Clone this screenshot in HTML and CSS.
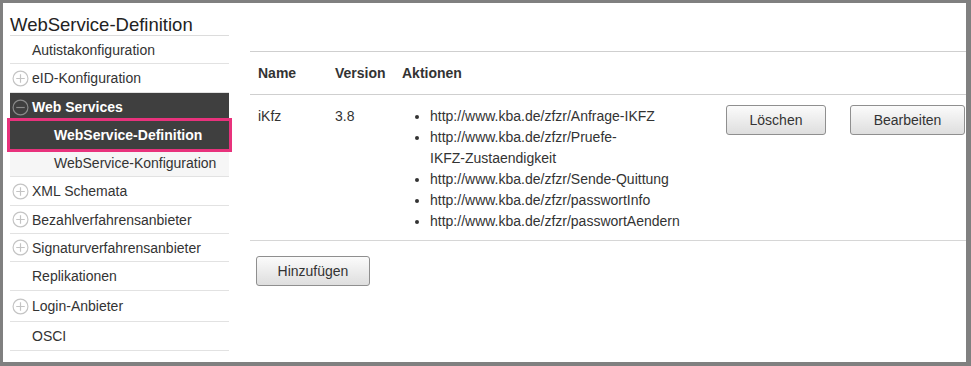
FILE: index.html
```html
<!DOCTYPE html>
<html lang="de">
<head>
<meta charset="utf-8">
<title>WebService-Definition</title>
<link rel="stylesheet" href="styles.css">
</head>
<body>
<div class="frame">
  <aside class="sidebar">
    <div class="side-title">WebService-Definition</div>
    <ul class="nav">
      <li class="nav-item">Autistakonfiguration</li>
      <li class="nav-item icon-row h29"><svg class="ico" viewBox="0 0 16 16"><circle cx="8" cy="8" r="7" /><path d="M4 8h8M8 4v8" /></svg>eID-Konfiguration</li>
      <li class="nav-item icon-row open"><svg class="ico" viewBox="0 0 16 16"><circle cx="8" cy="8" r="7" /><path d="M4 8h8" /></svg>Web Services</li>
      <li class="nav-item sub active">WebService-Definition</li>
      <li class="nav-item sub alt">WebService-Konfiguration</li>
      <li class="nav-item icon-row h29"><svg class="ico" viewBox="0 0 16 16"><circle cx="8" cy="8" r="7" /><path d="M4 8h8M8 4v8" /></svg>XML Schemata</li>
      <li class="nav-item icon-row"><svg class="ico" viewBox="0 0 16 16"><circle cx="8" cy="8" r="7" /><path d="M4 8h8M8 4v8" /></svg>Bezahlverfahrensanbieter</li>
      <li class="nav-item icon-row"><svg class="ico" viewBox="0 0 16 16"><circle cx="8" cy="8" r="7" /><path d="M4 8h8M8 4v8" /></svg>Signaturverfahrensanbieter</li>
      <li class="nav-item h29">Replikationen</li>
      <li class="nav-item icon-row h31"><svg class="ico" viewBox="0 0 16 16"><circle cx="8" cy="8" r="7" /><path d="M4 8h8M8 4v8" /></svg>Login-Anbieter</li>
      <li class="nav-item h29">OSCI</li>
    </ul>
  </aside>
  <main class="main">
    <table class="ws-table">
      <thead>
        <tr>
          <th class="c-name">Name</th>
          <th class="c-ver">Version</th>
          <th class="c-act">Aktionen</th>
        </tr>
      </thead>
      <tbody>
        <tr>
          <td class="c-name">iKfz</td>
          <td class="c-ver">3.8</td>
          <td class="c-act">
            <div class="act">
              <ul class="urls">
                <li>http://www.kba.de/zfzr/Anfrage-IKFZ</li>
                <li>http://www.kba.de/zfzr/Pruefe-<span class="nowrap">IKFZ-Zustaendigkeit</span></li>
                <li>http://www.kba.de/zfzr/Sende-Quittung</li>
                <li>http://www.kba.de/zfzr/passwortInfo</li>
                <li>http://www.kba.de/zfzr/passwortAendern</li>
              </ul>
              <button class="btn btn-del">Löschen</button>
              <button class="btn btn-edit">Bearbeiten</button>
            </div>
          </td>
        </tr>
      </tbody>
    </table>
    <button class="btn btn-add">Hinzufügen</button>
  </main>
</div>
</body>
</html>
```

FILE: styles.css
```css
* { box-sizing: border-box; }
html, body { margin: 0; padding: 0; }
body {
  font-family: "Liberation Sans", Arial, sans-serif;
  color: #333;
  background: #fff;
}
.frame {
  width: 971px;
  height: 366px;
  border-style: solid;
  border-color: #808080;
  border-width: 3px 5px 4px 3px;
  display: flex;
  overflow: hidden;
}
.sidebar {
  width: 219px;
  margin-left: 7px;
  flex: none;
}
.side-title {
  font-size: 18.5px;
  line-height: 22px;
  padding-top: 11px;
  height: 33px;
  color: #222;
  border-bottom: 1px solid #dcdcdc;
}
.nav {
  list-style: none;
  margin: 0;
  padding: 0;
}
.nav-item {
  height: 28px;
  font-size: 14px;
  padding-left: 22px;
  border-bottom: 1px solid #e2e2e2;
  color: #333;
  display: flex;
  align-items: center;
}
.nav-item.icon-row { padding-left: 2px; }
.nav-item.h29 { height: 29px; }
.nav-item.h31 { height: 31px; }
.ico {
  width: 17px;
  height: 17px;
  margin-right: 3px;
  flex: none;
}
.ico circle, .ico path {
  fill: none;
  stroke: #c4c4c4;
  stroke-width: 1.1;
}
.nav-item.open {
  background: #3f3f3f;
  color: #fff;
  font-weight: bold;
  height: 28px;
  border-bottom: none;
}
.nav-item.open .ico circle, .nav-item.open .ico path { stroke: #8a8a8a; }
.nav-item.sub { padding-left: 44px; }
.nav-item.active {
  background: #3f3f3f;
  color: #fff;
  font-weight: bold;
  border-bottom: none;
  outline: 3px solid #e8327c;
  height: 28px;
  margin-bottom: 1px;
  position: relative;
}
.nav-item.alt { background: #f6f6f6; height: 27px; }

.main {
  flex: 1;
  margin-left: 21px;
  padding-top: 48px;
}
.ws-table {
  width: 100%;
  border-collapse: collapse;
  font-size: 14px;
  line-height: 21px;
}
.ws-table th {
  text-align: left;
  font-weight: bold;
  color: #333;
  padding: 11px 0 10px;
  border-top: 1px solid #cfcfcf;
  border-bottom: 1px solid #cfcfcf;
}
.ws-table td {
  vertical-align: top;
  padding: 11px 0 8px;
  border-bottom: 1px solid #d6d6d6;
}
.c-name { width: 85px; padding-left: 8px !important; }
.c-ver { width: 67px; }
.act {
  display: flex;
  align-items: flex-start;
}
.urls {
  margin: 0;
  padding-left: 28px;
  width: 310px;
  margin-right: 14px;
  flex: none;
}
.nowrap { white-space: nowrap; }
.btn {
  font-family: "Liberation Sans", Arial, sans-serif;
  font-size: 14px;
  color: #333;
  height: 30px;
  border: 1px solid #8f8f8f;
  border-radius: 3px;
  background: linear-gradient(#fbfbfb, #dedede);
  padding: 0;
  cursor: pointer;
}
.btn-del { width: 100px; margin-top: -1px; }
.btn-edit { width: 115px; margin-left: 24px; margin-top: -1px; }
.btn-add { width: 114px; margin-top: 15px; margin-left: 6px; }
```
